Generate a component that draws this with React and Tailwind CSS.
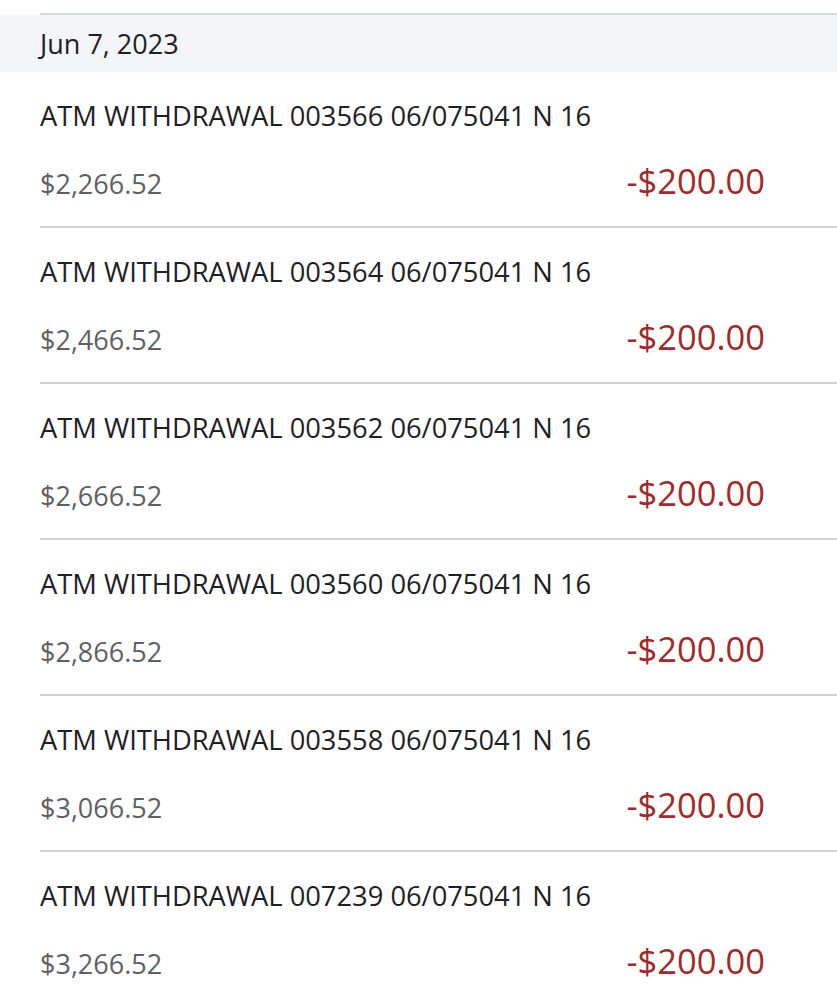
import React from 'react';

const rows = [
  { id: '003566', balance: '$2,266.52' },
  { id: '003564', balance: '$2,466.52' },
  { id: '003562', balance: '$2,666.52' },
  { id: '003560', balance: '$2,866.52' },
  { id: '003558', balance: '$3,066.52' },
  { id: '007239', balance: '$3,266.52' },
];

const App = () => {
  return (
    <div className="w-[837px] h-[1000px] overflow-hidden bg-white" style={{ fontFamily: '"Open Sans", sans-serif' }}>
      <div className="h-[13px]" />
      <div className="ml-10 h-[2px] bg-[#d4d6d9]" />
      {/* date header */}
      <div className="h-[57px] bg-[#f3f5f7] pl-10 pt-[2px] flex items-center text-[27px] text-[#1d2126]">
        Jun 7, 2023
      </div>

      {rows.map(row => (
        <div key={row.id} className="ml-10 border-b-2 border-[#cfd1d4] h-[156px] pr-[72px] pt-[26px]">
          <div className="text-[27.3px] leading-[36px] text-[#1d2126]">
            ATM WITHDRAWAL {row.id} 06/075041 N 16
          </div>
          <div className="mt-[21px] flex justify-between items-baseline">
            <span className="text-[27px] text-[#5d6166]">{row.balance}</span>
            <span className="text-[34.5px] text-[#a02a2c]">-$200.00</span>
          </div>
        </div>
      ))}
    </div>
  );
};

export default App;
